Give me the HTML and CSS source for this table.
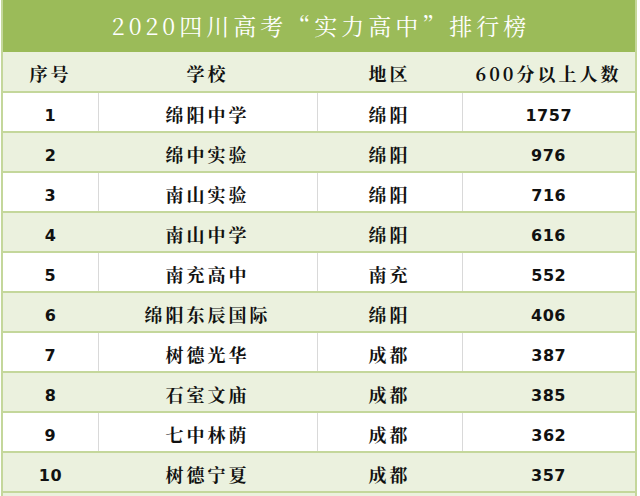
FILE: index.html
```html
<!DOCTYPE html>
<html lang="zh">
<head>
<meta charset="utf-8">
<link rel="stylesheet" href="styles.css">
</head>
<body>
<div class="sheet">
  <div class="title">2020四川高考“实力高中”排行榜</div>
  <table class="rank">
    <colgroup>
      <col class="c1"><col class="c2"><col class="c3"><col class="c4">
    </colgroup>
    <thead>
      <tr><th>序号</th><th>学校</th><th>地区</th><th>600分以上人数</th></tr>
    </thead>
    <tbody>
      <tr><td class="num">1</td><td>绵阳中学</td><td>绵阳</td><td class="num">1757</td></tr>
      <tr><td class="num">2</td><td>绵中实验</td><td>绵阳</td><td class="num">976</td></tr>
      <tr><td class="num">3</td><td>南山实验</td><td>绵阳</td><td class="num">716</td></tr>
      <tr><td class="num">4</td><td>南山中学</td><td>绵阳</td><td class="num">616</td></tr>
      <tr><td class="num">5</td><td>南充高中</td><td>南充</td><td class="num">552</td></tr>
      <tr><td class="num">6</td><td>绵阳东辰国际</td><td>绵阳</td><td class="num">406</td></tr>
      <tr><td class="num">7</td><td>树德光华</td><td>成都</td><td class="num">387</td></tr>
      <tr><td class="num">8</td><td>石室文庙</td><td>成都</td><td class="num">385</td></tr>
      <tr><td class="num">9</td><td>七中林荫</td><td>成都</td><td class="num">362</td></tr>
      <tr><td class="num">10</td><td>树德宁夏</td><td>成都</td><td class="num">357</td></tr>
    </tbody>
  </table>
</div>
</body>
</html>
```
FILE: styles.css
```css
html, body {
  margin: 0;
  padding: 0;
  background: #ffffff;
}
.sheet {
  width: 636px;
  margin-left: 1px;
  border-left: 2px solid #c4d79b;
  border-right: 2px solid #c4d79b;
  background: #ebf1de;
  height: 496px;
  box-sizing: border-box;
  overflow: hidden;
}
.title {
  height: 52px;
  background: #9bbb59;
  color: #ffffff;
  font-family: "Noto Serif CJK SC", "Liberation Serif", "Noto Sans CJK SC", serif;
  font-size: 23px;
  letter-spacing: 4px;
  line-height: 52px;
  text-align: center;
  padding-left: 4px;
}
.rank {
  width: 100%;
  border-collapse: collapse;
  table-layout: fixed;
  font-family: "Noto Serif CJK SC", "Liberation Serif", "Noto Sans CJK SC", serif;
  font-weight: bold;
  color: #111111;
}
.c1 { width: 95px; }
.c2 { width: 219px; }
.c3 { width: 145px; }
.c4 { width: auto; }
.rank th, .rank td {
  height: 35px;
  padding: 3px 0 0 0;
  text-align: center;
  font-size: 18px;
  letter-spacing: 3px;
  border-bottom: 2px solid #c4d79b;
}
.rank th {
  background: #ebf1de;
  height: 36px;
}
.rank td.num {
  font-family: "DejaVu Sans", "Liberation Sans", sans-serif;
  font-size: 16px;
  letter-spacing: 0.5px;
  padding-top: 6px;
  height: 32px;
}
.rank tbody tr:nth-child(odd) td {
  background: #ffffff;
}
.rank tbody tr:nth-child(odd) td + td {
  border-left: 1px solid #d9d9d9;
}
.rank tbody tr:nth-child(even) td {
  background: #ebf1de;
}
```
